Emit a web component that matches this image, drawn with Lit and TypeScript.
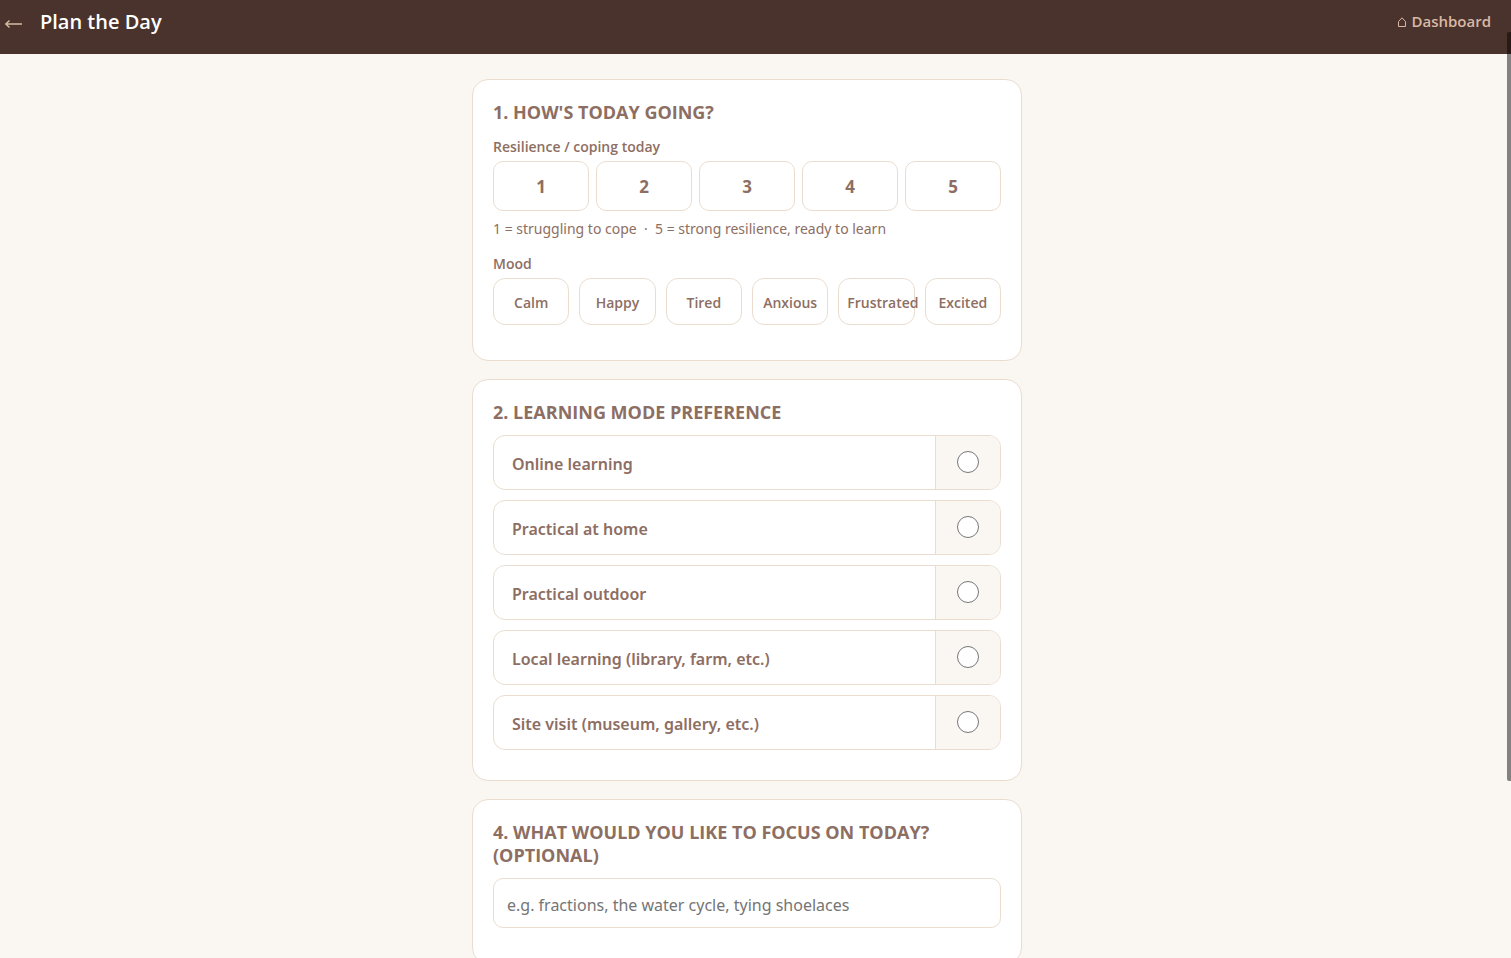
import { LitElement, html, css } from "lit";
import { customElement, state } from "lit/decorators.js";

const SCORES = [1, 2, 3, 4, 5];
const MOODS = ["Calm", "Happy", "Tired", "Anxious", "Frustrated", "Excited"];
const MODES = [
  "Online learning",
  "Practical at home",
  "Practical outdoor",
  "Local learning (library, farm, etc.)",
  "Site visit (museum, gallery, etc.)",
];

@customElement("app-root")
export class AppRoot extends LitElement {
  @state() private score = 0;
  @state() private mood = "";

  static styles = css`
    :host {
      --brown: #8d6e63;
      --line: #eaddd0;
      --cream: #faf6f1;
      display: block;
      position: relative;
      height: 100vh;
      overflow: hidden;
      background: var(--cream);
      color: var(--brown);
      font-family: "Segoe UI", "Open Sans", "Noto Sans", sans-serif;
    }
    *, *::before, *::after { box-sizing: border-box; }
    button, input { font: inherit; color: inherit; }
    header {
      display: flex;
      align-items: flex-start;
      gap: 16px;
      padding: 8px 20px 18px 4px;
      background: #4a332c;
    }
    .back {
      display: flex;
      padding: 4px 0 0;
      border: 0;
      background: none;
      color: #d9b9a5;
    }
    h1 {
      flex: 1;
      margin: 0;
      font-size: 20px;
      line-height: 28px;
      font-weight: 600;
      color: #fff;
    }
    .home {
      display: flex;
      align-items: center;
      gap: 4px;
      font-size: 15px;
      line-height: 26px;
      font-weight: 600;
      color: #d9b9a5;
      text-decoration: none;
    }
    main {
      display: flex;
      flex-direction: column;
      align-items: center;
      gap: 18px;
      padding: 25px 17px 25px 0;
    }
    .card {
      width: 100%;
      max-width: 550px;
      padding: 21px 20px 20px;
      border: 1px solid var(--line);
      border-radius: 16px;
      background: #fff;
    }
    h2 {
      margin: 0 0 11px;
      font-size: 18px;
      line-height: 23px;
      font-weight: 700;
      text-transform: uppercase;
    }
    .label {
      margin: 0;
      padding: 1px 0 3px;
      font-size: 14px;
      line-height: 22px;
      font-weight: 600;
    }
    .hint {
      margin: 8px 0 13px;
      font-family: "Segoe UI", "Noto Sans", sans-serif;
      font-size: 14px;
      line-height: 20px;
    }
    .scores {
      display: grid;
      grid-template-columns: repeat(5, 1fr);
      gap: 7px;
    }
    .moods {
      display: grid;
      grid-template-columns: repeat(6, minmax(0, 1fr));
      gap: 10px;
      margin-bottom: 15px;
    }
    .score, .mood {
      border: 1px solid var(--line);
      background: #fff;
    }
    .score {
      padding: 13px 0 11px;
      border-radius: 10px;
      font-size: 17px;
      line-height: 24px;
      font-weight: 700;
    }
    .mood {
      padding: 13px 8px 11px;
      border-radius: 12px;
      font-size: 14px;
      line-height: 21px;
      font-weight: 600;
    }
    .score[aria-pressed="true"], .mood[aria-pressed="true"] { background: var(--line); }
    .option {
      display: flex;
      margin-bottom: 10px;
      border: 1px solid var(--line);
      border-radius: 12px;
      overflow: hidden;
      font-family: "Segoe UI", "Noto Sans", sans-serif;
      font-size: 16px;
      line-height: 23px;
      font-weight: 600;
    }
    .name {
      flex: 1;
      padding: 17px 18px 13px;
    }
    .pick {
      display: flex;
      align-items: center;
      justify-content: center;
      width: 65px;
      padding-bottom: 1px;
      border-left: 1px solid var(--line);
      background: var(--cream);
    }
    .pick input {
      width: 22px;
      height: 22px;
      margin: 0;
    }
    .focus {
      display: block;
      width: 100%;
      margin-bottom: 15px;
      padding: 14px 13px 10px;
      border: 1px solid var(--line);
      border-radius: 10px;
      background: #fff;
      font-family: "Segoe UI", "Noto Sans", sans-serif;
      font-size: 16px;
      line-height: 24px;
    }
    .focus::placeholder { color: #757575; }
    .thumb {
      position: absolute;
      top: 32px;
      right: 0;
      width: 4px;
      height: 749px;
      border-radius: 2px 0 0 2px;
      background: rgba(0, 0, 0, 0.47);
    }
  `;

  render() {
    return html`
      <header>
        <button class="back" aria-label="Back">
          <svg width="20" height="20" viewBox="0 0 20 20" fill="none" stroke="currentColor" stroke-width="1.4">
            <path d="M18 12H2M5.5 8.5L1.8 12L5.5 15.5" />
          </svg>
        </button>
        <h1>Plan the Day</h1>
        <a class="home" href="#dashboard">
          <svg width="10" height="12" viewBox="0 0 10 12" fill="none" stroke="currentColor" stroke-width="1">
            <path d="M1.5 11.5V6.5L5 2.8L8.5 6.5V11.5Z" />
          </svg>Dashboard</a>
      </header>
      <main>
        <section class="card">
          <h2>1. How's today going?</h2>
          <p class="label" id="score-label">Resilience / coping today</p>
          <div class="scores" role="group" aria-labelledby="score-label">
            ${SCORES.map((n) => html`
              <button class="score" aria-pressed=${this.score === n ? "true" : "false"}
                @click=${() => (this.score = n)}>${n}</button>`)}
          </div>
          <p class="hint">1 = struggling to cope&nbsp; ·&nbsp; 5 = strong resilience, ready to learn</p>
          <p class="label" id="mood-label">Mood</p>
          <div class="moods" role="group" aria-labelledby="mood-label">
            ${MOODS.map((m) => html`
              <button class="mood" aria-pressed=${this.mood === m ? "true" : "false"}
                @click=${() => (this.mood = m)}>${m}</button>`)}
          </div>
        </section>
        <section class="card">
          <h2>2. Learning mode preference</h2>
          ${MODES.map((m) => html`
            <label class="option">
              <span class="name">${m}</span>
              <span class="pick"><input type="radio" name="mode" .value=${m} /></span>
            </label>`)}
        </section>
        <section class="card">
          <h2><label for="focus">4. What would you like to focus on today? (optional)</label></h2>
          <input class="focus" id="focus" type="text"
            placeholder="e.g. fractions, the water cycle, tying shoelaces" />
        </section>
      </main>
      <div class="thumb"></div>
    `;
  }
}
